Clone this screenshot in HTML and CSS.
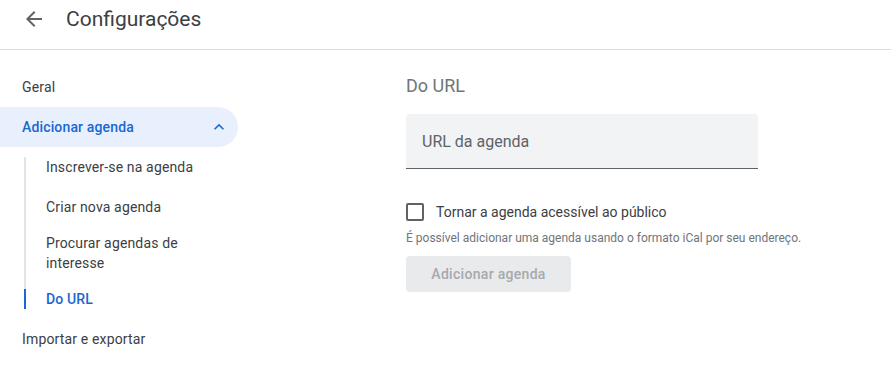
FILE: index.html
```html
<!DOCTYPE html>
<html lang="pt-BR">
<head>
<meta charset="utf-8">
<title>Configurações</title>
<link rel="stylesheet" href="styles.css">
</head>
<body>
<header class="topbar">
  <button class="back" aria-label="Voltar">
    <svg viewBox="0 0 24 24" width="24" height="24"><path d="M20 11H7.83l5.59-5.59L12 4l-8 8 8 8 1.41-1.41L7.83 13H20v-2z" fill="#5f6368"/></svg>
  </button>
  <h1 class="title">Configurações</h1>
</header>
<div class="layout">
  <nav class="sidebar">
    <div class="nav-item">Geral</div>
    <div class="nav-item active">
      <span>Adicionar agenda</span>
      <svg class="chev" viewBox="0 0 24 24" width="20" height="20"><path d="M12 8l-6 6 1.41 1.41L12 10.83l4.59 4.58L18 14z" fill="#1967d2"/></svg>
    </div>
    <div class="sub-list">
      <div class="sub-item"><div class="sub-label">Inscrever-se na agenda</div></div>
      <div class="sub-item"><div class="sub-label">Criar nova agenda</div></div>
      <div class="sub-item multi"><div class="sub-label">Procurar agendas de interesse</div></div>
      <div class="sub-item current"><div class="sub-label">Do URL</div></div>
    </div>
    <div class="nav-item">Importar e exportar</div>
  </nav>
  <main class="content">
    <h2 class="heading">Do URL</h2>
    <div class="field"><span class="placeholder">URL da agenda</span></div>
    <label class="check-row">
      <span class="checkbox"></span>
      <span class="check-label">Tornar a agenda acessível ao público</span>
    </label>
    <p class="help">É possível adicionar uma agenda usando o formato iCal por seu endereço.</p>
    <button class="add-btn" disabled>Adicionar agenda</button>
  </main>
</div>
</body>
</html>
```
FILE: styles.css
```css
* { box-sizing: border-box; }
body {
  margin: 0;
  font-family: Roboto, "Liberation Sans", Arial, sans-serif;
  color: #3c4043;
  background: #fff;
}
.topbar {
  display: flex;
  align-items: center;
  height: 50px;
  padding-bottom: 11px;
  border-bottom: 1px solid #dadce0;
}
.back {
  border: 0;
  background: none;
  padding: 0;
  margin-left: 22px;
  width: 24px;
  height: 24px;
  display: flex;
}
.title {
  margin: 0 0 0 20px;
  font-size: 21px;
  font-weight: 400;
  color: #3c4043;
  line-height: 28px;
}
.layout {
  display: flex;
}
.sidebar {
  width: 238px;
  flex: none;
  padding-top: 17px;
  font-size: 14px;
  line-height: 20px;
  letter-spacing: 0.15px;
}
.nav-item {
  display: flex;
  align-items: center;
  justify-content: space-between;
  height: 40px;
  padding-left: 22px;
  padding-right: 9px;
}
.nav-item.active {
  background: #e8f0fe;
  border-radius: 0 20px 20px 0;
  color: #1967d2;
  font-weight: 500;
}
.chev { display: block; }
.sub-list {
  margin: 10px 0 10px 24px;
  border-left: 2px solid #e3e4e6;
}
.sub-item {
  padding: 10px 24px 10px 0;
}
.sub-item:first-child { padding-top: 0; }
.sub-item:last-child { padding-bottom: 0; }
.sub-item.multi { padding-top: 6px; padding-bottom: 6px; }
.sub-label {
  margin-left: -2px;
  border-left: 2px solid transparent;
  padding-left: 20px;
}
.sub-item.current .sub-label {
  border-left-color: #1967d2;
  color: #1967d2;
  font-weight: 500;
}
.content {
  margin-left: 168px;
  padding-top: 24px;
  width: 420px;
}
.heading {
  margin: 0;
  font-size: 18px;
  font-weight: 400;
  line-height: 24px;
  color: #70757a;
}
.field {
  margin-top: 16px;
  width: 352px;
  height: 55px;
  background: #f1f3f4;
  border-radius: 4px 4px 0 0;
  border-bottom: 1px solid #5f6368;
  display: flex;
  align-items: center;
  padding-left: 16px;
}
.placeholder {
  font-size: 16px;
  color: #5f6368;
}
.check-row {
  display: flex;
  align-items: center;
  height: 24px;
  margin-top: 31px;
  gap: 12px;
}
.checkbox {
  width: 18px;
  height: 18px;
  border: 2px solid #5f6368;
  border-radius: 2px;
}
.check-label {
  font-size: 14px;
  color: #3c4043;
}
.help {
  margin: 6px 0 0;
  font-size: 12px;
  line-height: 16px;
  color: #70757a;
  white-space: nowrap;
}
.add-btn {
  margin-top: 10px;
  height: 36px;
  width: 165px;
  padding: 0;
  border: 0;
  border-radius: 4px;
  background: #e9eaeb;
  color: #a6a9ad;
  font-family: inherit;
  font-size: 14px;
  font-weight: 500;
  letter-spacing: 0.3px;
}
```
